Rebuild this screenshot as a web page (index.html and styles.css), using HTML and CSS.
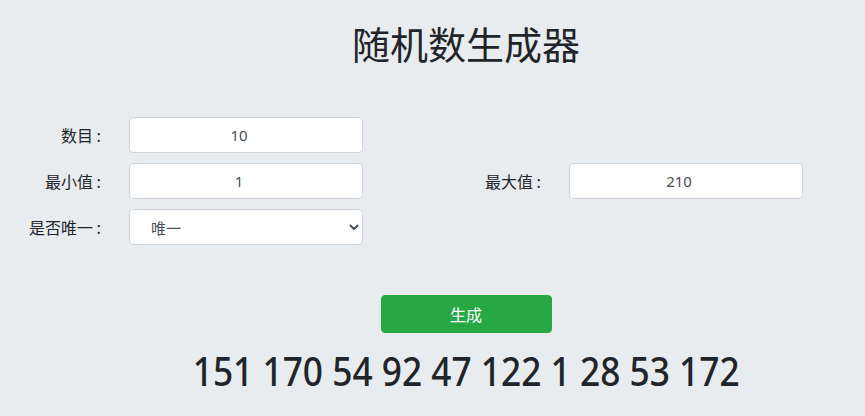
FILE: index.html
```html
<!DOCTYPE html>
<html lang="zh">
<head>
<meta charset="utf-8">
<title>随机数生成器</title>
<link rel="stylesheet" href="styles.css">
</head>
<body>
<div class="page">
  <h1 class="title">随机数生成器</h1>
  <form class="form">
    <label class="label">数目 :</label>
    <input class="field" type="text" value="10">
    <span></span><span></span>
    <label class="label">最小值 :</label>
    <input class="field" type="text" value="1">
    <label class="label">最大值 :</label>
    <input class="field" type="text" value="210">
    <label class="label">是否唯一 :</label>
    <select class="field select"><option>唯一</option></select>
  </form>
  <div class="actions"><button class="btn" type="button">生成</button></div>
  <div class="result"><span class="nums">151 170 54 92 47 122 1 28 53 172</span></div>
</div>
</body>
</html>
```
FILE: styles.css
```css
html, body {
  margin: 0;
  padding: 0;
  background: #e9ecef;
  color: #212529;
  font-family: "Noto Sans", "Noto Sans CJK SC", sans-serif;
}
.page {
  width: 865px;
  height: 416px;
  overflow: hidden;
}
.title {
  margin: 13px 0 0 67px;
  text-align: center;
  font-family: "Noto Sans CJK SC", sans-serif;
  font-weight: 400;
  font-size: 38px;
  line-height: 60px;
  color: #212529;
}
.form {
  margin-top: 44px;
  display: grid;
  grid-template-columns: 101px 234px 150px 234px;
  column-gap: 28px;
  row-gap: 10px;
  align-items: center;
}
.label {
  text-align: right;
  font-family: "Noto Sans CJK SC", sans-serif;
  font-size: 16px;
  color: #212529;
}
.field {
  box-sizing: border-box;
  height: 36px;
  width: 234px;
  border: 1px solid #ced4da;
  border-radius: 4px;
  background: #fff;
  text-align: center;
  font-family: "Noto Sans", "Noto Sans CJK SC", sans-serif;
  font-size: 15px;
  color: #495057;
  padding: 0 19px 0 5px;
  outline: none;
}
.select {
  text-align: left;
  padding-left: 17px;
  padding-right: 8px;
  font-family: "Noto Sans CJK SC", sans-serif;
}
.actions {
  margin-top: 50px;
  padding-left: 67px;
  display: flex;
  justify-content: center;
}
.btn {
  width: 171px;
  height: 38px;
  background: #28a745;
  border: 1px solid #28a745;
  border-radius: 4px;
  color: #fff;
  font-family: "Noto Sans CJK SC", sans-serif;
  font-size: 16px;
}
.result {
  margin-top: 14px;
  padding-left: 67px;
  text-align: center;
  line-height: 48px;
}
.nums {
  display: inline-block;
  font-family: "Noto Sans", sans-serif;
  font-weight: 500;
  font-size: 39px;
  color: #212529;
  transform: scaleX(0.905);
  transform-origin: center;
  white-space: nowrap;
}
```
